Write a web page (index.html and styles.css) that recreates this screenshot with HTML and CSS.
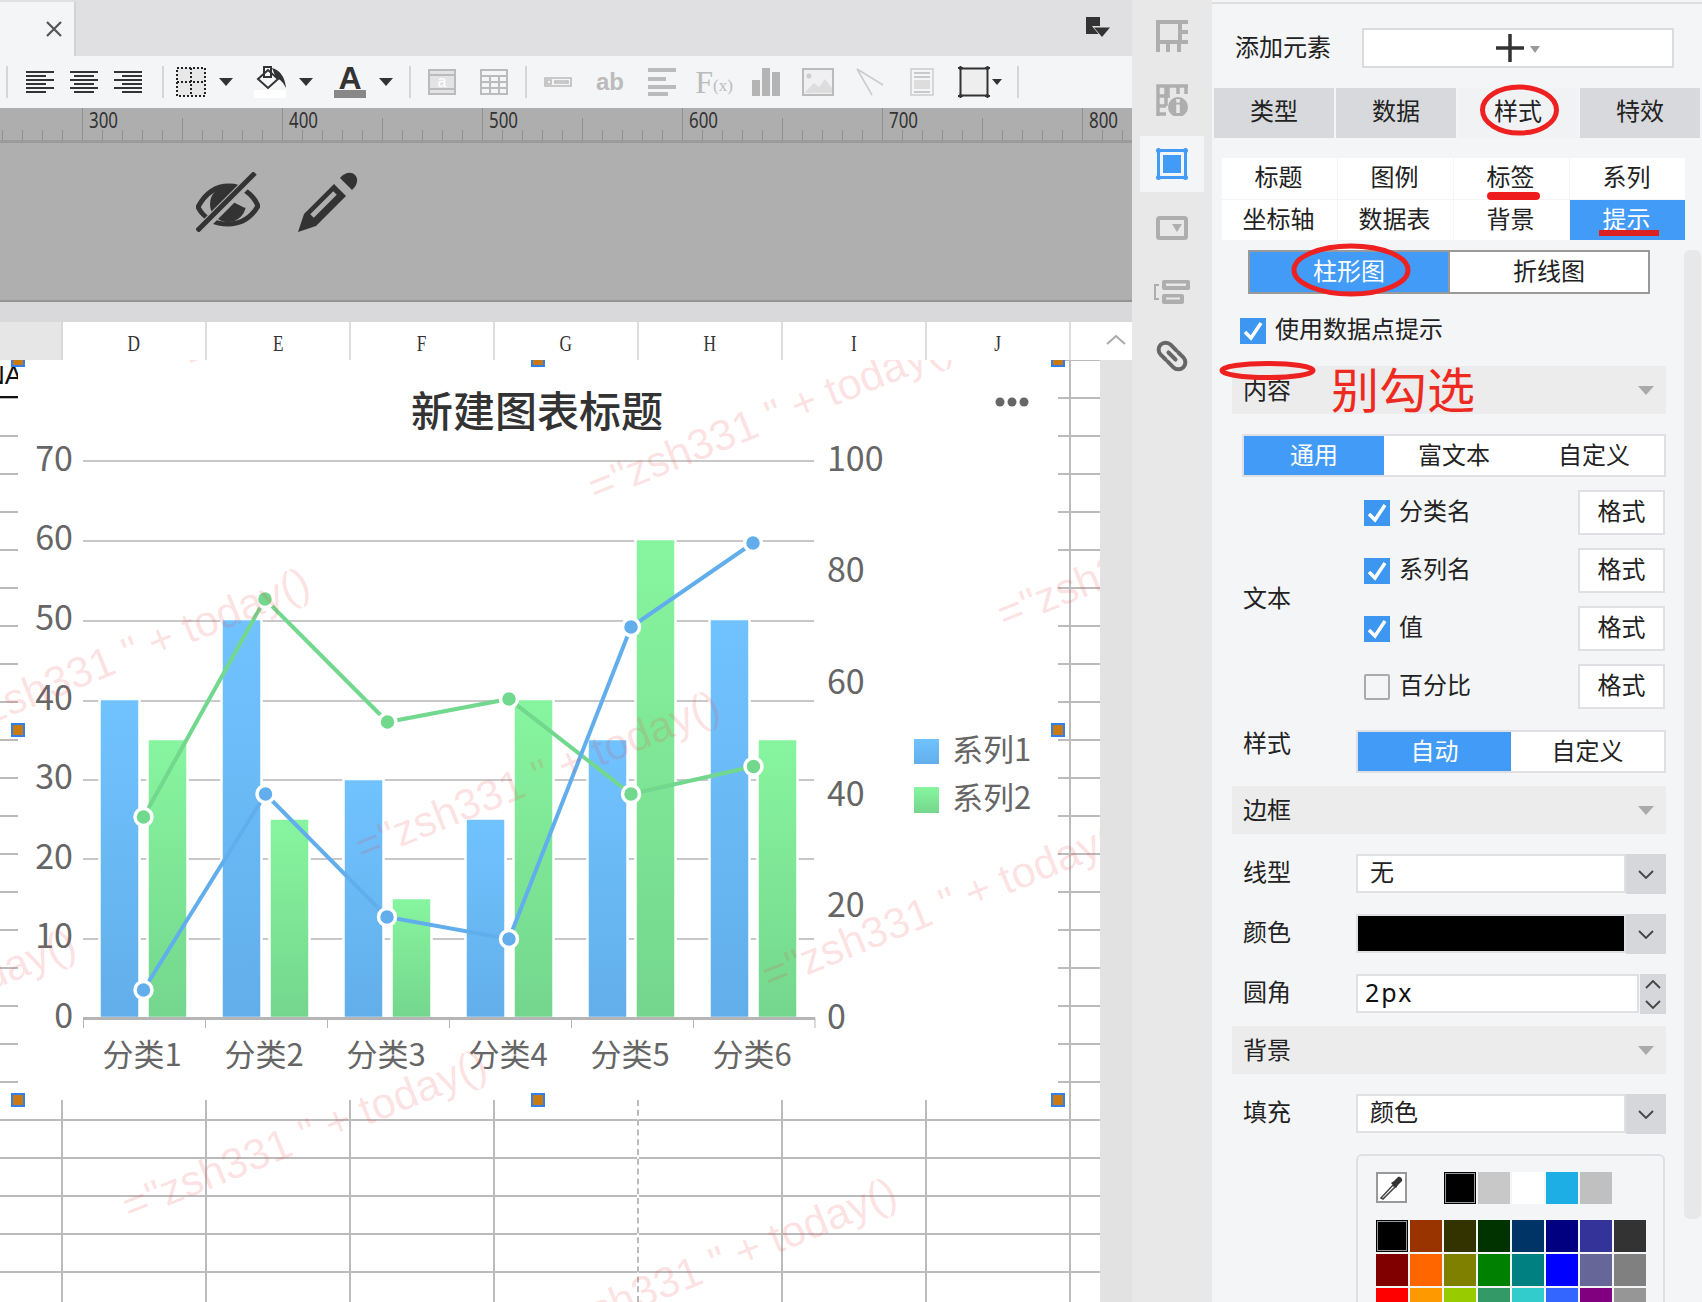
FILE: index.html
```html
<!DOCTYPE html>
<html lang="zh-CN">
<head>
    <meta charset="UTF-8">
    <title>图表设置</title>
    <link rel="stylesheet" href="styles.css">
</head>
<body>
<div class="app">
    <div class="workspace">
        <div class="tabbar">
            <div class="tab">
                <svg class="tab-close" width="16" height="16" viewBox="0 0 16 16"><path d="M1 1L15 15M15 1L1 15" stroke="#555" stroke-width="2.200" fill="none"/></svg>
            </div>
            <svg class="corner-icon" width="24" height="22" viewBox="0 0 24 22"><rect x="0" y="0" width="14" height="17" fill="#333"/><path d="M6 9H24L15 20Z" fill="#e0e0e2"/><path d="M8 10.500H24L16 20Z" fill="#333"/></svg>
        </div>

        <div class="toolbar">
            <span class="tb-sep"></span>
            <div class="tb-group tb-align">
                <span class="tool-align"><svg width="28" height="22" viewBox="0 0 28 22"><path d="M0 1H28M0 5H20M0 9H28M0 13H20M0 17H28M0 21H20" stroke="#333" stroke-width="2"/></svg></span>
                <span class="tool-align"><svg width="28" height="22" viewBox="0 0 28 22"><path d="M0 1H28M4 5H24M0 9H28M4 13H24M0 17H28M4 21H24" stroke="#333" stroke-width="2"/></svg></span>
                <span class="tool-align"><svg width="28" height="22" viewBox="0 0 28 22"><path d="M0 1H28M8 5H28M0 9H28M8 13H28M0 17H28M8 21H28" stroke="#333" stroke-width="2"/></svg></span>
            </div>
            <span class="tb-sep sep-2"></span>
            <div class="tb-group tb-format">
                <svg width="30" height="30" viewBox="0 0 30 30"><rect x="1" y="1" width="28" height="28" fill="#e8e8e8"/><path d="M1 1H29V29H1ZM15 1V29M1 15H29" fill="none" stroke="#222" stroke-width="2" stroke-dasharray="2 2"/></svg>
                <i class="tool-caret"></i>
                <svg class="format-gap" width="32" height="32" viewBox="0 0 32 32"><rect x="0" y="24" width="32" height="8" fill="#fff"/><path d="M4 13L14 4L24 13L14 22Z" fill="none" stroke="#333" stroke-width="2"/><rect x="10" y="1" width="7" height="10" fill="none" stroke="#333" stroke-width="2"/><path d="M18 2C26 4 31 11 32 22C29 16 26 13 22 12Z" fill="#333"/></svg>
                <i class="tool-caret"></i>
                <svg class="format-gap tool-a-icon" width="32" height="32" viewBox="0 0 32 32"><text x="16" y="23" class="tool-letter" text-anchor="middle">A</text><rect x="0" y="24" width="32" height="8" fill="#888"/></svg>
                <i class="tool-caret"></i>
            </div>
            <span class="tb-sep sep-3"></span>
            <div class="tb-group tb-insert-a">
                <span class="tool-slot"><svg width="28" height="26" viewBox="0 0 28 26"><rect x="1" y="1" width="26" height="24" fill="#e3e3e5" stroke="#bbb" stroke-width="2"/><path d="M1 6H27M1 20H27" stroke="#bbb" stroke-width="2"/><text x="14" y="18" class="tool-a-text" text-anchor="middle">a</text></svg></span>
                <span class="tool-slot"><svg width="28" height="26" viewBox="0 0 28 26"><path d="M1 1H27V25H1ZM1 7H27M1 13H27M1 19H27M10 7V25M19 7V25" fill="none" stroke="#bbb" stroke-width="2"/></svg></span>
            </div>
            <span class="tb-sep sep-4"></span>
            <div class="tb-group tb-insert-b">
                <span class="tool-slot"><svg width="28" height="10" viewBox="0 0 28 10"><path d="M1 1H27V9H1ZM3 3H7V7H3ZM11 4H24V6H11Z" fill="none" stroke="#bbb" stroke-width="1.600"/></svg></span>
                <span class="tool-slot tool-ab">ab</span>
                <span class="tool-slot"><svg width="28" height="28" viewBox="0 0 28 28"><path d="M0 2H28M0 11H18M0 19H28M0 26H20" stroke="#bbb" stroke-width="4"/></svg></span>
                <span class="tool-slot tool-fx">F<small>(x)</small></span>
                <span class="tool-slot"><svg width="28" height="28" viewBox="0 0 28 28"><path d="M0 12H8V28H0ZM10 0H18V28H10ZM20 4H28V28H20Z" fill="#b4b4b4"/></svg></span>
                <span class="tool-slot"><svg width="32" height="28" viewBox="0 0 32 28"><rect x="1" y="1" width="30" height="26" fill="#f0f0f2" stroke="#bbb" stroke-width="2"/><circle cx="7" cy="8" r="2.500" fill="#ccc"/><path d="M3 24L12 15L17 19L23 11L30 20V25H3Z" fill="#ddd"/></svg></span>
                <span class="tool-slot"><svg width="28" height="28" viewBox="0 0 28 28"><path d="M1 1L27 17M1 1L16 27" stroke="#ccc" stroke-width="1.600" fill="none"/></svg></span>
                <span class="tool-slot"><svg width="24" height="28" viewBox="0 0 24 28"><rect x="1" y="1" width="22" height="26" fill="#f4f5f7" stroke="#ccc" stroke-width="1.500"/><path d="M4 5H20M4 9H20M4 24H20" stroke="#bbb" stroke-width="1.500"/><rect x="4" y="12" width="16" height="9" fill="#ddd"/></svg></span>
                <svg class="tool-frame" width="32" height="32" viewBox="0 0 32 32"><rect x="2.500" y="2.500" width="27" height="27" fill="#eee" stroke="#333" stroke-width="2"/><path d="M0 2H5M27 2H32M0 30H5M27 30H32M2.500 0V4M29.500 0V4M2.500 28V32M29.500 28V32" stroke="#333" stroke-width="2"/></svg>
                <i class="tool-caret-small"></i>
            </div>
            <span class="tb-sep sep-5"></span>
        </div>

        <svg class="ruler" width="1132" height="35" viewBox="0 0 1132 35">
            <defs>
                <pattern id="ruler-ticks" x="82" y="0" width="200" height="35" patternUnits="userSpaceOnUse">
                    <path d="M.5 0V33M100.500 10V33M20.500 22V33M40.500 22V33M60.500 22V33M80.500 22V33M120.500 22V33M140.500 22V33M160.500 22V33M180.500 22V33" stroke="#909090" stroke-width="1"/>
                </pattern>
            </defs>
            <rect width="1132" height="33" fill="url(#ruler-ticks)"/>
            <rect y="32" width="1132" height="3" fill="#9b9b9b"/>
            <text class="ruler-num" x="89" y="20" textLength="29" lengthAdjust="spacingAndGlyphs">300</text>
            <text class="ruler-num" x="289" y="20" textLength="29" lengthAdjust="spacingAndGlyphs">400</text>
            <text class="ruler-num" x="489" y="20" textLength="29" lengthAdjust="spacingAndGlyphs">500</text>
            <text class="ruler-num" x="689" y="20" textLength="29" lengthAdjust="spacingAndGlyphs">600</text>
            <text class="ruler-num" x="889" y="20" textLength="29" lengthAdjust="spacingAndGlyphs">700</text>
            <text class="ruler-num" x="1089" y="20" textLength="29" lengthAdjust="spacingAndGlyphs">800</text>
        </svg>

        <div class="canvas-area">
            <svg width="64" height="60" viewBox="0 0 64 60">
                <circle cx="32" cy="32" r="18" fill="#333"/>
                <path d="M35 29L50 12L60 26L49 36Z" fill="#afafaf"/>
                <path d="M2 35C10 20 21 14 33 14C46 14 57 22 62 34C55 46 44 52 32 52C20 52 8 47 2 35Z" fill="none" stroke="#333" stroke-width="5"/>
                <path d="M-2 64L66 -4" stroke="#afafaf" stroke-width="10"/>
                <path d="M1 59L59 1" stroke="#333" stroke-width="5"/>
            </svg>
            <svg class="pencil" width="60" height="60" viewBox="0 0 60 60">
                <path d="M0 60L6 42L36 12L48 24L18 54Z" fill="#333"/>
                <path d="M14 44L37 21" stroke="#afafaf" stroke-width="5"/>
                <path d="M42 6C46 1 53 -1 57 3C61 7 59 14 54 18Z" fill="#333"/>
            </svg>
        </div>
        <div class="band"></div>

        <div class="col-head">
            <div class="col-corner"></div>
            <div class="col"><span>D</span></div>
            <div class="col"><span>E</span></div>
            <div class="col"><span>F</span></div>
            <div class="col"><span>G</span></div>
            <div class="col"><span>H</span></div>
            <div class="col"><span>I</span></div>
            <div class="col"><span>J</span></div>
            <div class="col-rest"></div>
            <div class="scroll-up"><svg width="20" height="11" viewBox="0 0 20 11"><path d="M1 10L10 2L19 10" fill="none" stroke="#aaa" stroke-width="2"/></svg></div>
        </div>

        <div class="sheet-wrap">
            <div class="sheet">
                <div class="cell-clip"><span>NA</span></div>
                <div class="page-break"></div>

                <!-- chart object floats over the cells -->
                <div class="chart-object">
                    <svg class="chart" width="1040" height="740" viewBox="18 360 1040 740">
                        <defs>
                            <linearGradient id="bar-blue" x1="0" y1="0" x2="0" y2="1"><stop offset="0" stop-color="#70c3ff"/><stop offset="1" stop-color="#62aeea"/></linearGradient>
                            <linearGradient id="bar-green" x1="0" y1="0" x2="0" y2="1"><stop offset="0" stop-color="#87f59f"/><stop offset="1" stop-color="#74d68d"/></linearGradient>
                        </defs>
                        <rect x="18" y="360" width="1040" height="740" fill="#fff"/>
                        <text class="chart-title" x="411" y="427">新建图表标题</text>
                        <g fill="#666"><circle cx="1000" cy="402" r="4.500"/><circle cx="1012" cy="402" r="4.500"/><circle cx="1024" cy="402" r="4.500"/></g>

                        <path class="grid-line" d="M83 461H814M83 541H814M83 621H814M83 701H814M83 780H814M83 859H814M83 939H814"/>

                        <g class="axis-num" text-anchor="end">
                            <text x="73" y="471">70</text><text x="73" y="550">60</text><text x="73" y="630">50</text><text x="73" y="710">40</text><text x="73" y="789">30</text><text x="73" y="869">20</text><text x="73" y="948">10</text><text x="73" y="1028">0</text>
                        </g>
                        <g class="axis-num">
                            <text x="827" y="471">100</text><text x="827" y="582">80</text><text x="827" y="694">60</text><text x="827" y="806">40</text><text x="827" y="917">20</text><text x="827" y="1029">0</text>
                        </g>

                        <g fill="url(#bar-blue)" stroke="#fff" stroke-width="2.500">
                            <rect x="99.500" y="699" width="40" height="319"/>
                            <rect x="221.500" y="619" width="40" height="399"/>
                            <rect x="343.500" y="779" width="40" height="239"/>
                            <rect x="465.500" y="818.500" width="40" height="199.500"/>
                            <rect x="587.500" y="739" width="40" height="279"/>
                            <rect x="709.500" y="619" width="40" height="399"/>
                        </g>
                        <g fill="url(#bar-green)" stroke="#fff" stroke-width="2.500">
                            <rect x="147.500" y="739" width="40" height="279"/>
                            <rect x="269.500" y="818.500" width="40" height="199.500"/>
                            <rect x="391.500" y="898" width="40" height="120"/>
                            <rect x="513.500" y="699" width="40" height="319"/>
                            <rect x="635.500" y="539" width="40" height="479"/>
                            <rect x="757.500" y="739" width="40" height="279"/>
                        </g>

                        <path class="axis-line" d="M83 1018.500H815"/>
                        <path class="axis-tick" d="M83.500 1018V1028M205.500 1018V1028M327.500 1018V1028M449.500 1018V1028M571.500 1018V1028M693.500 1018V1028M815 1018V1028"/>

                        <polyline class="series-line line-green" points="143.500,817 265,599 387.500,722 509,699 631,794 753.500,766.500"/>
                        <polyline class="series-line line-blue" points="143.500,990 265.500,794 387,917 509,939 631,627 753,543"/>
                        <g class="marker marker-green">
                            <circle cx="143.500" cy="817" r="8.500"/><circle cx="265" cy="599" r="8.500"/><circle cx="387.500" cy="722" r="8.500"/><circle cx="509" cy="699" r="8.500"/><circle cx="631" cy="794" r="8.500"/><circle cx="753.500" cy="766.500" r="8.500"/>
                        </g>
                        <g class="marker marker-blue">
                            <circle cx="143.500" cy="990" r="8.500"/><circle cx="265.500" cy="794" r="8.500"/><circle cx="387" cy="917" r="8.500"/><circle cx="509" cy="939" r="8.500"/><circle cx="631" cy="627" r="8.500"/><circle cx="753" cy="543" r="8.500"/>
                        </g>

                        <g class="cat-label" text-anchor="middle">
                            <text x="142" y="1066">分类1</text><text x="264" y="1066">分类2</text><text x="386" y="1066">分类3</text><text x="508" y="1066">分类4</text><text x="630" y="1066">分类5</text><text x="752" y="1066">分类6</text>
                        </g>

                        <rect x="914" y="739" width="25" height="25" fill="url(#bar-blue)"/>
                        <text class="cat-label" x="952" y="761">系列1</text>
                        <rect x="914" y="787" width="25" height="26" fill="url(#bar-green)"/>
                        <text class="cat-label" x="952" y="809">系列2</text>
                    </svg>
                </div>

                <i class="handle h-tl"></i><i class="handle h-tc"></i><i class="handle h-tr"></i>
                <i class="handle h-ml"></i><i class="handle h-mr"></i>
                <i class="handle h-bl"></i><i class="handle h-bc"></i><i class="handle h-br"></i>

                <span class="wm wm-1">="zsh331 " + today()</span>
                <span class="wm wm-2">="zsh331 " + today()</span>
                <span class="wm wm-3">="zsh331 " + today()</span>
                <span class="wm wm-4">="zsh331 " + today()</span>
                <span class="wm wm-5">="zsh331 " + today()</span>
                <span class="wm wm-6">="zsh331 " + today()</span>
                <span class="wm wm-7">="zsh331 " + today()</span>
                <span class="wm wm-8">="zsh331 " + today()</span>
                <span class="wm wm-9">="zsh331 " + today()</span>
            </div>
            <div class="sheet-scroll"></div>
        </div>
    </div>

    <div class="rail">
        <div class="rail-item">
            <svg width="32" height="32" viewBox="0 0 32 32"><path d="M2 32V2H32M2 22H32M24 2V22M24 12H32M12 22V32M23 22V32" fill="none" stroke="#aeaeae" stroke-width="4"/></svg>
        </div>
        <div class="rail-item">
            <svg width="32" height="32" viewBox="0 0 32 32"><path d="M2 32V2H32M12 2V10M22 2V10M30 2V10M2 12H14M2 22H10M2 30H10M10 2V22" fill="none" stroke="#aeaeae" stroke-width="3.500"/><circle cx="22" cy="23" r="10" fill="#aeaeae"/><rect x="20.200" y="15" width="3.600" height="3.600" fill="#e8e8e8"/><rect x="20.200" y="20.500" width="3.600" height="8.500" fill="#e8e8e8"/></svg>
        </div>
        <div class="rail-item rail-active">
            <svg width="32" height="32" viewBox="0 0 32 32"><rect x="2.500" y="2.500" width="27" height="27" fill="none" stroke="#429bf7" stroke-width="3"/><rect x="7" y="7" width="18" height="18" fill="#429bf7"/><g fill="#429bf7"><circle cx="2.500" cy="2.500" r="2.500"/><circle cx="29.500" cy="2.500" r="2.500"/><circle cx="2.500" cy="29.500" r="2.500"/><circle cx="29.500" cy="29.500" r="2.500"/></g></svg>
        </div>
        <div class="rail-item">
            <svg width="32" height="24" viewBox="0 0 32 24"><rect x="2" y="2" width="28" height="20" rx="1.500" fill="none" stroke="#aeaeae" stroke-width="4"/><path d="M16 8H26L21 16Z" fill="#aeaeae"/></svg>
        </div>
        <div class="rail-item">
            <svg width="36" height="24" viewBox="0 0 36 24"><path fill-rule="evenodd" d="M10 0H34Q36 0 36 2V8Q36 10 34 10H10Q8 10 8 8V2Q8 0 10 0ZM12 3.500V6H32V3.500Z" fill="#aeaeae"/><path fill-rule="evenodd" d="M10 14H28Q30 14 30 16V22Q30 24 28 24H10Q8 24 8 22V16Q8 14 10 14ZM12 17.500V19.500H26V17.500Z" fill="#aeaeae"/><path d="M5 5H1V19H5" fill="none" stroke="#aeaeae" stroke-width="2"/></svg>
        </div>
        <div class="rail-item">
            <svg width="32" height="32" viewBox="-16 -16 32 32"><g transform="rotate(45)" fill="none" stroke="#666" stroke-width="4" stroke-linecap="round"><path d="M-1 -7H-9A7 7 0 0 0 -9 7H-2"/><path d="M1 7H9A7 7 0 0 0 9 -7H2"/><path d="M-5 0H5"/></g></svg>
        </div>
    </div>

    <div class="panel">
        <div class="panel-rule"></div>
        <div class="add-row">
            <span class="add-label">添加元素</span>
            <div class="add-box">
                <svg width="28" height="28" viewBox="0 0 28 28"><path d="M14 0V28M0 14H28" stroke="#333" stroke-width="3.500"/></svg>
                <i class="add-caret"></i>
            </div>
        </div>

        <div class="main-tabs">
            <div class="main-tab">类型</div>
            <div class="main-tab">数据</div>
            <div class="main-tab main-tab-active">样式</div>
            <div class="main-tab">特效</div>
        </div>

        <div class="sub-tabs">
            <div class="sub-tab">标题</div>
            <div class="sub-tab">图例</div>
            <div class="sub-tab">标签</div>
            <div class="sub-tab">系列</div>
            <div class="sub-tab">坐标轴</div>
            <div class="sub-tab">数据表</div>
            <div class="sub-tab">背景</div>
            <div class="sub-tab sub-tab-active">提示</div>
        </div>

        <div class="toggle">
            <div class="toggle-item toggle-on">柱形图</div>
            <div class="toggle-item">折线图</div>
        </div>

        <label class="check-row">
            <span class="check"><svg width="26" height="26" viewBox="0 0 26 26"><path d="M5 14L11 20L21 5" fill="none" stroke="#fff" stroke-width="3.500"/></svg></span>
            <span class="check-text">使用数据点提示</span>
        </label>

        <div class="props">
            <div class="section"><span>内容</span><i class="section-caret"></i></div>

            <div class="seg seg-wide">
                <div class="seg-item seg-on">通用</div>
                <div class="seg-item">富文本</div>
                <div class="seg-item">自定义</div>
            </div>

            <div class="text-group">
                <div class="group-label">文本</div>
                <div class="text-rows">
                    <div class="text-row">
                        <span class="check"><svg width="26" height="26" viewBox="0 0 26 26"><path d="M5 14L11 20L21 5" fill="none" stroke="#fff" stroke-width="3.500"/></svg></span>
                        <span class="text-name">分类名</span>
                        <div class="format-btn">格式</div>
                    </div>
                    <div class="text-row">
                        <span class="check"><svg width="26" height="26" viewBox="0 0 26 26"><path d="M5 14L11 20L21 5" fill="none" stroke="#fff" stroke-width="3.500"/></svg></span>
                        <span class="text-name">系列名</span>
                        <div class="format-btn">格式</div>
                    </div>
                    <div class="text-row">
                        <span class="check"><svg width="26" height="26" viewBox="0 0 26 26"><path d="M5 14L11 20L21 5" fill="none" stroke="#fff" stroke-width="3.500"/></svg></span>
                        <span class="text-name">值</span>
                        <div class="format-btn">格式</div>
                    </div>
                    <div class="text-row">
                        <span class="check check-off"></span>
                        <span class="text-name">百分比</span>
                        <div class="format-btn">格式</div>
                    </div>
                </div>
            </div>

            <div class="form-row style-row">
                <div class="form-label style-label">样式</div>
                <div class="seg seg-small">
                    <div class="seg-item seg-on">自动</div>
                    <div class="seg-item">自定义</div>
                </div>
            </div>

            <div class="section section-border"><span>边框</span><i class="section-caret"></i></div>

            <div class="form-row first-row">
                <div class="form-label">线型</div>
                <div class="select">
                    <div class="select-value">无</div>
                    <div class="select-btn"><svg width="16" height="9" viewBox="0 0 16 9"><path d="M1 1L8 8L15 1" fill="none" stroke="#444" stroke-width="1.800"/></svg></div>
                </div>
            </div>
            <div class="form-row">
                <div class="form-label">颜色</div>
                <div class="select">
                    <div class="select-value color-value"><span class="color-fill"></span></div>
                    <div class="select-btn"><svg width="16" height="9" viewBox="0 0 16 9"><path d="M1 1L8 8L15 1" fill="none" stroke="#444" stroke-width="1.800"/></svg></div>
                </div>
            </div>
            <div class="form-row">
                <div class="form-label">圆角</div>
                <div class="spinner">
                    <div class="spinner-value">2px</div>
                    <div class="spinner-btn">
                        <svg width="16" height="9" viewBox="0 0 16 9"><path d="M1 8L8 1L15 8" fill="none" stroke="#444" stroke-width="1.800"/></svg>
                        <svg width="16" height="9" viewBox="0 0 16 9"><path d="M1 1L8 8L15 1" fill="none" stroke="#444" stroke-width="1.800"/></svg>
                    </div>
                </div>
            </div>

            <div class="section section-bg"><span>背景</span><i class="section-caret"></i></div>

            <div class="form-row first-row">
                <div class="form-label">填充</div>
                <div class="select">
                    <div class="select-value">颜色</div>
                    <div class="select-btn"><svg width="16" height="9" viewBox="0 0 16 9"><path d="M1 1L8 8L15 1" fill="none" stroke="#444" stroke-width="1.800"/></svg></div>
                </div>
            </div>

            <div class="palette">
                <div class="palette-recent">
                    <div class="dropper"><svg width="27" height="27" viewBox="0 0 27 27"><path d="M3 24L15 11L17 13L5 25Z" fill="#fff" stroke="#444" stroke-width="1.500"/><path d="M13 9L18 14L20 11L24 7C25 5 22 2 20 3L16 7Z" fill="#333"/></svg></div>
                    <span class="swatch c-000000 swatch-picked"></span>
                    <span class="swatch c-c8c8c8"></span>
                    <span class="swatch c-ffffff"></span>
                    <span class="swatch c-1eaee6"></span>
                    <span class="swatch c-c0c0c0"></span>
                </div>
                <div class="palette-grid">
                    <span class="swatch c-000000 swatch-picked"></span>
                    <span class="swatch c-993300"></span>
                    <span class="swatch c-333300"></span>
                    <span class="swatch c-003300"></span>
                    <span class="swatch c-003366"></span>
                    <span class="swatch c-000080"></span>
                    <span class="swatch c-333399"></span>
                    <span class="swatch c-333333"></span>
                    <span class="swatch c-800000"></span>
                    <span class="swatch c-ff6600"></span>
                    <span class="swatch c-808000"></span>
                    <span class="swatch c-008000"></span>
                    <span class="swatch c-008080"></span>
                    <span class="swatch c-0000ff"></span>
                    <span class="swatch c-666699"></span>
                    <span class="swatch c-808080"></span>
                    <span class="swatch c-ff0000"></span>
                    <span class="swatch c-ff9900"></span>
                    <span class="swatch c-99cc00"></span>
                    <span class="swatch c-339966"></span>
                    <span class="swatch c-33cccc"></span>
                    <span class="swatch c-3366ff"></span>
                    <span class="swatch c-800080"></span>
                    <span class="swatch c-969696"></span>
                </div>
            </div>
        </div>

        <div class="panel-scroll"></div>

        <!-- red notes someone drew on the screenshot -->
        <svg class="notes" width="490" height="460" viewBox="0 0 490 460">
            <g fill="none" stroke="#ee2020" stroke-width="5">
                <ellipse cx="307.500" cy="110" rx="37" ry="23"/>
                <ellipse cx="139" cy="270" rx="57" ry="24"/>
                <ellipse cx="55.500" cy="370.500" rx="45.500" ry="7"/>
            </g>
            <path d="M279 196H324" stroke="#ee1c1c" stroke-width="8" stroke-linecap="round"/>
            <path d="M387 233H447" stroke="#dd2020" stroke-width="6"/>
            <text class="note-text" x="119" y="408">别勾选</text>
        </svg>
    </div>
</div>
</body>
</html>
```

FILE: styles.css
```css
html, body {
    margin: 0;
    padding: 0;
    height: 100%;
    overflow: hidden;
}
body {
    font-family: "Noto Sans CJK SC", "Noto Sans", sans-serif;
    font-size: 24px;
    color: #222;
    background-color: #f4f5f7;
}
.app {
    display: flex;
    width: 1702px;
    height: 1302px;
    overflow: hidden;
}
.workspace {
    width: 1132px;
    display: flex;
    flex-direction: column;
    flex-shrink: 0;
}

/* tab bar */
.tabbar {
    height: 56px;
    background-color: #e0e0e2;
    display: flex;
    align-items: center;
    justify-content: space-between;
    padding-right: 22px;
    box-sizing: border-box;
}
.tab {
    width: 76px;
    height: 54px;
    margin-top: 2px;
    box-sizing: border-box;
    background-color: #f4f5f7;
    border-right: 2px solid #d2d2d4;
    display: flex;
    align-items: center;
    justify-content: flex-end;
    padding-right: 12px;
}

/* toolbar */
.toolbar {
    height: 52px;
    background-color: #f4f5f7;
    display: flex;
    align-items: center;
    padding-left: 6px;
    box-sizing: border-box;
}
.tb-sep {
    width: 2px;
    height: 32px;
    background-color: #d6d6d8;
    flex-shrink: 0;
}
.tb-group {
    display: flex;
    align-items: center;
}
.tb-align { margin-left: 10px; }
.sep-2 { margin-left: 12px; }
.tb-format { margin-left: 12px; gap: 13px; }
.sep-3 { margin-left: 16px; }
.tb-insert-a { margin-left: 5px; }
.sep-4 { margin-left: 5px; }
.tb-insert-b { margin-left: 5px; }
.sep-5 { margin-left: 15px; }
.tool-align {
    width: 44px;
    display: flex;
    justify-content: center;
}
.tool-slot {
    width: 52px;
    display: flex;
    justify-content: center;
    align-items: center;
}
.tool-caret {
    width: 0;
    height: 0;
    border-left: 7px solid transparent;
    border-right: 7px solid transparent;
    border-top: 8px solid #333;
}
.format-gap { margin-left: 8px; }
.tool-a-icon { overflow: visible; }
.tool-caret-small {
    width: 0;
    height: 0;
    margin-left: 2px;
    border-left: 5px solid transparent;
    border-right: 5px solid transparent;
    border-top: 6px solid #333;
}
.tool-frame { margin-left: 10px; }
.tool-letter {
    font-family: "Liberation Sans", sans-serif;
    font-weight: bold;
    font-size: 32px;
    fill: #333;
}
.tool-a-text {
    font-family: "Liberation Sans", sans-serif;
    font-size: 16px;
    fill: #fff;
}
.tool-ab {
    font-family: "Liberation Sans", sans-serif;
    font-weight: bold;
    font-size: 24px;
    color: #bbb;
}
.tool-fx {
    font-family: "Liberation Serif", serif;
    font-size: 32px;
    color: #bbb;
}
.tool-fx small {
    font-size: 17px;
    margin-top: 8px;
}

/* ruler and grey canvas */
.ruler {
    display: block;
    background-color: #aeaeae;
    flex-shrink: 0;
    overflow: visible;
}
.ruler-num {
    font-family: "Noto Sans", sans-serif;
    font-size: 21px;
    fill: #333;
}
.canvas-area {
    height: 159px;
    box-sizing: border-box;
    background-color: #afafaf;
    border-bottom: 2px solid #949494;
    display: flex;
    align-items: flex-start;
    padding: 29px 0 0 196px;
}
.pencil { margin-left: 38px; }
.band {
    height: 20px;
    background-color: #d9d9db;
}

/* column header */
.col-head {
    height: 38px;
    display: flex;
    background-color: #fff;
    flex-shrink: 0;
}
.col-corner {
    width: 63px;
    background-color: #e6e6e6;
    border-right: 2px solid #d9d9d9;
    box-sizing: border-box;
}
.col {
    width: 144px;
    box-sizing: border-box;
    border-right: 2px solid #ddd;
    display: flex;
    align-items: center;
    justify-content: center;
    padding-top: 4px;
    font-family: "Liberation Serif", serif;
    font-size: 24px;
    line-height: 24px;
    color: #333;
}
.col span {
    display: inline-block;
    transform: scaleX(0.72);
}
.col-rest { width: 29px; }
.scroll-up {
    width: 32px;
    display: flex;
    justify-content: center;
    padding-top: 12px;
    box-sizing: border-box;
}

/* sheet */
.sheet-wrap {
    flex: 1;
    display: flex;
    min-height: 0;
}
.sheet {
    flex: 1;
    position: relative;
    overflow: hidden;
    background-color: #fff;
    background-image:
        linear-gradient(to bottom, transparent 36px, #bbb 36px),
        linear-gradient(to right, transparent 142px, #bbb 142px);
    background-size: 100% 38px, 144px 100%;
    background-position: 0 1px, 63px 0;
}
.sheet-scroll {
    width: 32px;
    background-color: #e2e2e2;
}
.cell-clip {
    position: absolute;
    left: 0;
    top: 0;
    width: 18px;
    height: 38px;
    box-sizing: border-box;
    border-bottom: 2px solid #111;
    background-color: #fff;
    overflow: hidden;
    display: flex;
    justify-content: flex-end;
    align-items: flex-start;
    font-family: "Liberation Sans", sans-serif;
    font-size: 26px;
    line-height: 30px;
    color: #111;
}
.cell-clip span { margin-right: -4px; }
.page-break {
    position: absolute;
    left: 637px;
    top: 740px;
    bottom: 0;
    width: 2px;
    background-color: #fff;
    border-left: 2px dashed #bbb;
    box-sizing: border-box;
}
.chart-object {
    position: absolute;
    left: 18px;
    top: 0;
    width: 1040px;
    height: 740px;
}
.chart { display: block; }
.chart-title {
    font-size: 42px;
    font-weight: 500;
    fill: #333;
}
.grid-line {
    stroke: #c8c8c8;
    stroke-width: 2;
    fill: none;
}
.axis-num {
    font-size: 34px;
    fill: #666;
}
.cat-label {
    font-size: 31px;
    fill: #666;
}
.axis-line {
    stroke: #b5b5b5;
    stroke-width: 3;
    fill: none;
}
.axis-tick {
    stroke: #b5b5b5;
    stroke-width: 1;
    fill: none;
}
.series-line {
    fill: none;
    stroke-width: 4;
}
.line-blue { stroke: #62aeec; }
.line-green { stroke: #72d88e; }
.marker { stroke: #fff; stroke-width: 3.500; }
.marker-blue { fill: #62aeec; }
.marker-green { fill: #72d88e; }

.handle {
    position: absolute;
    width: 14px;
    height: 14px;
    box-sizing: border-box;
    background-color: #c97a10;
    border: 2px solid #2f7fee;
}
.h-tl, .h-tc, .h-tr { top: -7px; }
.h-ml, .h-mr { top: 363px; }
.h-bl, .h-bc, .h-br { top: 733px; }
.h-tl, .h-ml, .h-bl { left: 11px; }
.h-tc, .h-bc { left: 531px; }
.h-tr, .h-mr, .h-br { left: 1051px; }

/* watermark text */
.wm {
    position: absolute;
    font-family: "Liberation Sans", sans-serif;
    font-size: 43px;
    line-height: 43px;
    white-space: pre;
    color: rgba(238, 70, 70, 0.16);
    transform: rotate(-22deg);
    transform-origin: 0 100%;
}
.wm-1 { left: 598px; top: 106px; }
.wm-2 { left: -45px; top: 343px; }
.wm-3 { left: 365px; top: 466px; }
.wm-4 { left: 772px; top: 594px; }
.wm-5 { left: 1007px; top: 233px; }
.wm-6 { left: 132px; top: 825px; }
.wm-7 { left: 542px; top: 953px; }
.wm-8 { left: -279px; top: 704px; }
.wm-9 { left: 194px; top: -26px; }

/* icon rail */
.rail {
    width: 80px;
    flex-shrink: 0;
    background-color: #e8e8e8;
    display: flex;
    flex-direction: column;
    align-items: center;
    padding-top: 4px;
    box-sizing: border-box;
}
.rail-item {
    width: 64px;
    height: 64px;
    display: flex;
    align-items: center;
    justify-content: center;
    box-sizing: border-box;
}
.rail-active {
    background-color: #f4f5f7;
    height: 56px;
    margin: 4px 0;
}

/* right panel */
.panel {
    position: relative;
    flex: 1;
    background-color: #f4f5f7;
    overflow: hidden;
}
.panel-rule {
    height: 2px;
    margin-top: 2px;
    background-color: #dedede;
}
.add-row {
    display: flex;
    align-items: center;
    height: 40px;
    margin-top: 24px;
    padding-left: 23px;
}
.add-label {
    width: 127px;
    padding-bottom: 6px;
}
.add-box {
    width: 312px;
    height: 40px;
    box-sizing: border-box;
    background-color: #fff;
    border: 2px solid #dcdcdc;
    display: flex;
    align-items: center;
    justify-content: center;
    position: relative;
}
.add-caret {
    margin-left: 6px;
    margin-top: 2px;
    width: 0;
    height: 0;
    border-left: 5px solid transparent;
    border-right: 5px solid transparent;
    border-top: 7px solid #999;
}
.main-tabs {
    display: flex;
    gap: 2px;
    height: 50px;
    margin: 20px 0 0 2px;
}
.main-tab {
    width: 120px;
    box-sizing: border-box;
    padding-bottom: 8px;
    background-color: #d8d9dc;
    display: flex;
    align-items: center;
    justify-content: center;
}
.main-tab-active { background-color: #f1f2f4; }
.sub-tabs {
    display: grid;
    grid-template-columns: repeat(4, 115px);
    grid-template-rows: 41px 40px;
    gap: 1px;
    margin: 20px 0 0 10px;
}
.sub-tab {
    box-sizing: border-box;
    padding: 0 2px 6px 0;
    background-color: #fff;
    display: flex;
    align-items: center;
    justify-content: center;
}
.sub-tab-active {
    background-color: #429bf7;
    color: #fff;
}
.toggle {
    display: flex;
    width: 402px;
    height: 44px;
    box-sizing: border-box;
    margin: 10px 0 0 36px;
    border: 2px solid #999;
    background-color: #fff;
}
.toggle-item {
    flex: 1;
    box-sizing: border-box;
    padding-bottom: 6px;
    display: flex;
    align-items: center;
    justify-content: center;
}
.toggle-item + .toggle-item { border-left: 2px solid #999; }
.toggle-on {
    background-color: #429bf7;
    color: #fff;
}
.check-row {
    display: flex;
    align-items: center;
    gap: 9px;
    height: 26px;
    margin: 24px 0 0 28px;
}
.check-text { margin-bottom: 8px; }
.check {
    width: 26px;
    height: 26px;
    flex-shrink: 0;
    background-color: #3d96f0;
    display: block;
}
.check svg { display: block; }
.check-off {
    background-color: transparent;
    border: 2px solid #aaa;
    border-radius: 2px;
    box-sizing: border-box;
}

.props {
    width: 434px;
    margin: 22px 0 0 20px;
}
.section {
    height: 48px;
    background-color: #ececec;
    display: flex;
    align-items: center;
    justify-content: space-between;
    padding: 0 12px 0 11px;
}
.section span { padding-bottom: 4px; }
.section-caret {
    width: 0;
    height: 0;
    border-left: 8px solid transparent;
    border-right: 8px solid transparent;
    border-top: 9px solid #aaa;
}
.section-border { margin-top: 13px; }
.section-bg { margin-top: 12px; }

.seg {
    display: flex;
    box-sizing: border-box;
    border: 2px solid #dfdfe4;
    background-color: #fff;
}
.seg-wide {
    width: 424px;
    height: 43px;
    margin: 20px 0 0 10px;
}
.seg-small {
    width: 310px;
    height: 43px;
}
.seg-item {
    flex: 1;
    box-sizing: border-box;
    padding-bottom: 5px;
    display: flex;
    align-items: center;
    justify-content: center;
}
.seg-on {
    background-color: #429bf7;
    color: #fff;
}

.text-group {
    display: flex;
    margin-top: 13px;
}
.group-label {
    width: 132px;
    box-sizing: border-box;
    padding: 0 0 6px 11px;
    align-self: center;
}
.text-rows {
    display: flex;
    flex-direction: column;
    gap: 13px;
}
.text-row {
    display: flex;
    align-items: center;
    width: 301px;
    height: 45px;
}
.text-name {
    flex: 1;
    margin-left: 9px;
    padding-bottom: 6px;
}
.format-btn {
    width: 87px;
    height: 45px;
    box-sizing: border-box;
    padding-bottom: 6px;
    background-color: #fff;
    border: 2px solid #dfdfe4;
    display: flex;
    align-items: center;
    justify-content: center;
}

.form-row {
    display: flex;
    align-items: center;
    height: 40px;
    margin-top: 20px;
}
.form-label {
    width: 124px;
    box-sizing: border-box;
    padding: 0 0 7px 11px;
}
.style-row {
    height: 43px;
    margin-top: 21px;
}
.style-label { padding-bottom: 20px; }
.select {
    display: flex;
    width: 310px;
    height: 40px;
}
.select-value {
    flex: 1;
    box-sizing: border-box;
    height: 39px;
    background-color: #fff;
    border: 2px solid #dfdfe4;
    padding: 0 0 6px 12px;
    display: flex;
    align-items: center;
}
.color-value { padding: 0; }
.color-fill {
    width: 100%;
    height: 35px;
    background-color: #000;
}
.select-btn {
    width: 40px;
    background-color: #d6d7da;
    display: flex;
    align-items: center;
    justify-content: center;
}
.spinner {
    display: flex;
    width: 310px;
    height: 40px;
    gap: 1px;
}
.spinner-value {
    flex: 1;
    height: 39px;
    box-sizing: border-box;
    background-color: #fff;
    border: 2px solid #dfdfe4;
    padding: 0 0 4px 7px;
    display: flex;
    align-items: center;
    font-family: "Noto Sans", sans-serif;
    font-size: 25px;
    letter-spacing: 2px;
    color: #111;
}
.spinner-btn {
    width: 26px;
    background-color: #d6d7da;
    display: flex;
    flex-direction: column;
    align-items: center;
    justify-content: center;
    gap: 11px;
}

.palette {
    width: 309px;
    margin: 20px 0 0 124px;
    box-sizing: border-box;
    padding: 16px 18px;
    border: 2px solid #dfdfe4;
    border-bottom: none;
    border-radius: 6px 6px 0 0;
}
.palette-recent {
    display: flex;
    gap: 2px;
}
.dropper {
    width: 31px;
    height: 31px;
    box-sizing: border-box;
    margin-right: 35px;
    background-color: #fff;
    border: 2px solid #999;
}
.dropper svg { display: block; }
.palette-grid {
    display: grid;
    grid-template-columns: repeat(8, 32px);
    grid-auto-rows: 32px;
    gap: 2px;
    margin-top: 16px;
}
.swatch {
    display: block;
    width: 32px;
    height: 32px;
    box-sizing: border-box;
}
.swatch-picked { border: 2px solid #999; outline: 1px solid #000; outline-offset: -1px; }
.c-000000 { background-color: #000000; }
.c-c8c8c8 { background-color: #c8c8c8; }
.c-ffffff { background-color: #ffffff; }
.c-1eaee6 { background-color: #1eaee6; }
.c-c0c0c0 { background-color: #c0c0c0; }
.c-993300 { background-color: #993300; }
.c-333300 { background-color: #333300; }
.c-003300 { background-color: #003300; }
.c-003366 { background-color: #003366; }
.c-000080 { background-color: #000080; }
.c-333399 { background-color: #333399; }
.c-333333 { background-color: #333333; }
.c-800000 { background-color: #800000; }
.c-ff6600 { background-color: #ff6600; }
.c-808000 { background-color: #808000; }
.c-008000 { background-color: #008000; }
.c-008080 { background-color: #008080; }
.c-0000ff { background-color: #0000ff; }
.c-666699 { background-color: #666699; }
.c-808080 { background-color: #808080; }
.c-ff0000 { background-color: #ff0000; }
.c-ff9900 { background-color: #ff9900; }
.c-99cc00 { background-color: #99cc00; }
.c-339966 { background-color: #339966; }
.c-33cccc { background-color: #33cccc; }
.c-3366ff { background-color: #3366ff; }
.c-800080 { background-color: #800080; }
.c-969696 { background-color: #969696; }

.panel-scroll {
    position: absolute;
    left: 472px;
    top: 250px;
    width: 17px;
    height: 969px;
    background-color: #e8e8e8;
    border-radius: 6px;
}
.notes {
    position: absolute;
    left: 0;
    top: 0;
}
.note-text {
    font-size: 48px;
    fill: #ee2a20;
}
```
